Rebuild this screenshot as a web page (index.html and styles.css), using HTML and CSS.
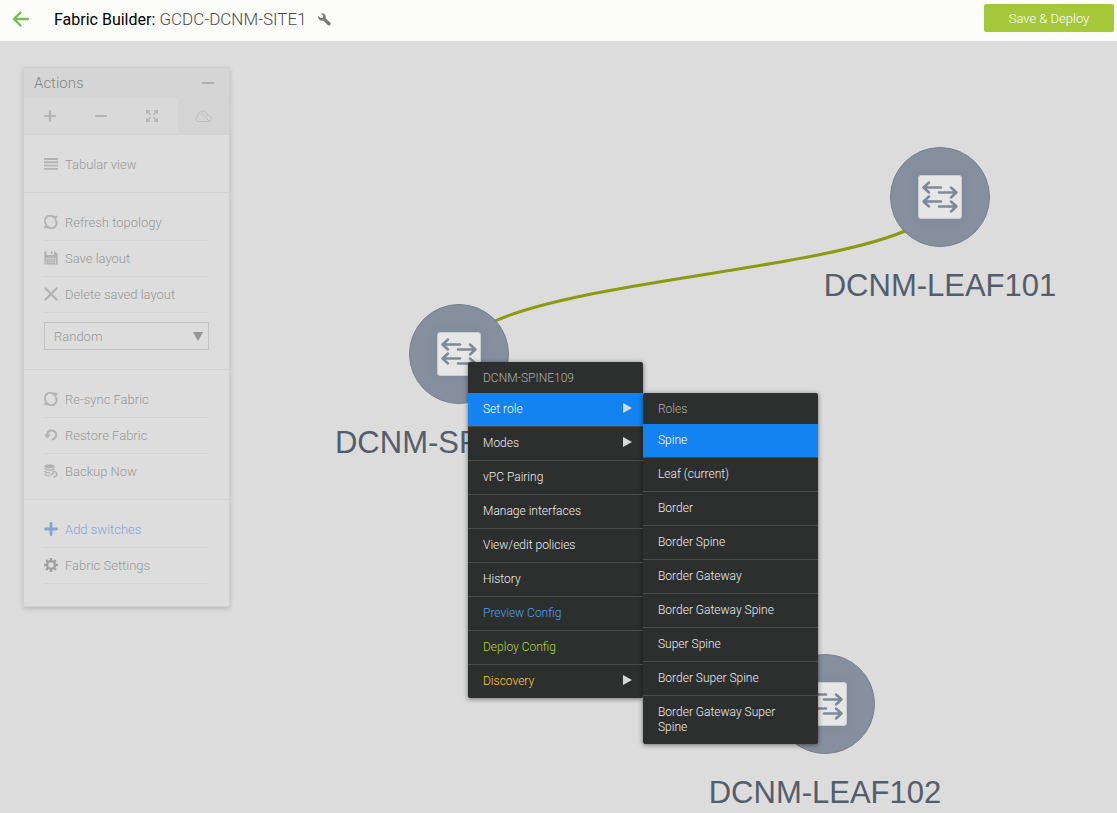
FILE: index.html
```html
<!DOCTYPE html>
<html lang="en">
<head>
<meta charset="utf-8">
<title>Fabric Builder</title>
<link rel="stylesheet" href="styles.css">
</head>
<body>
<svg class="defs" aria-hidden="true">
  <symbol id="sync" viewBox="0 0 14 14"><path d="M2 9A5 5 0 0 1 10 2.700M11.500 5A5 5 0 0 1 3.500 11.300" fill="none" stroke="currentColor" stroke-width="2"/><path d="M8 .8H13.500V2L11.500 5.500ZM0 13.200V12L2 8.500L5.500 13.200Z" fill="currentColor"/></symbol>
  <symbol id="switch" viewBox="0 0 44 44"><rect x=".5" y=".5" width="43" height="43" rx="2.500" fill="#e6e6e6" stroke="#c9ced6"/><path d="M23 12.500H6M11 7.500L5.500 12.500L11 17.500M21 17.500H38M33 12.500L38.500 17.500L33 22.500M23 26.500H6M11 21.500L5.500 26.500L11 31.500M21 31.500H38M33 26.500L38.500 31.500L33 36.500" fill="none" stroke="#7d8998" stroke-width="2.500" stroke-linecap="round" stroke-linejoin="round"/></symbol>
</svg>

<header class="topbar">
  <a class="back" href="#" aria-label="Back"><svg width="18" height="16" viewBox="0 0 18 16"><path d="M8.500 1.500L2 8L8.500 14.500M2.500 8H16" fill="none" stroke="#74bf4b" stroke-width="2.400" stroke-linecap="round" stroke-linejoin="round"/></svg></a>
  <h1 class="title"><span class="title-label">Fabric Builder:</span> GCDC-DCNM-SITE1</h1>
  <svg class="wrench" width="13" height="13" viewBox="0 0 13 13"><path d="M3.200 .4A3.600 3.600 0 0 1 7.500 5.200L12.100 9.600A1.600 1.600 0 0 1 9.700 12L5.200 7.400A3.600 3.600 0 0 1 .4 3L2.700 5.100L4.800 4.700L5.200 2.700Z" fill="#7a7a7a"/></svg>
  <button class="deploy" type="button">Save &amp; Deploy</button>
</header>

<main class="stage">
  <svg class="links" width="100%" height="100%"><path d="M495 280C585 240 815 228 905 190" fill="none" stroke="#8b9a10" stroke-width="3"/></svg>

  <div class="node leaf101"><span class="disc"><svg width="44" height="44"><use href="#switch"/></svg></span><span class="node-name">DCNM-LEAF101</span></div>
  <div class="node spine109"><span class="disc"><svg width="44" height="44"><use href="#switch"/></svg></span><span class="node-name">DCNM-SPINE109</span></div>
  <div class="node leaf102"><span class="disc"><svg width="44" height="44"><use href="#switch"/></svg></span><span class="node-name">DCNM-LEAF102</span></div>

  <aside class="panel">
    <div class="panel-head"><h2 class="panel-title">Actions</h2><button class="collapse" type="button" aria-label="Collapse"></button></div>
    <div class="tools">
      <button class="tool" type="button" aria-label="Zoom in"><svg width="12" height="12" viewBox="0 0 12 12"><path d="M6 1V11M1 6H11" stroke="currentColor" stroke-width="2.200" stroke-linecap="round"/></svg></button>
      <button class="tool" type="button" aria-label="Zoom out"><svg width="12" height="12" viewBox="0 0 12 12"><path d="M1 6H11" stroke="currentColor" stroke-width="2.200" stroke-linecap="round"/></svg></button>
      <button class="tool" type="button" aria-label="Fit to screen"><svg width="12" height="12" viewBox="0 0 12 12"><path d="M.7 4V.7H4M8 .7H11.300V4M11.300 8V11.300H8M4 11.300H.7V8M1 1L4.700 4.700M11 1L7.300 4.700M11 11L7.300 7.300M1 11L4.700 7.300" fill="none" stroke="currentColor" stroke-width="1.400"/></svg></button>
      <button class="tool active" type="button" aria-label="Hide clouds"><svg width="17" height="13" viewBox="0 0 17 13"><path d="M4 11.500C-.3 11.500-.2 6.300 3.100 5.900C3 2.500 5.500 .9 8 1C10.500 1 12 3 12.200 5C17.600 5.400 17.500 11.500 13 11.500ZM6 2.500L15 12" fill="none" stroke="currentColor"/></svg></button>
    </div>
    <section class="group">
      <a class="action" href="#"><svg width="14" height="14" viewBox="0 0 14 14"><path d="M0 2H14M0 5.300H14M0 8.600H14M0 11.900H14" stroke="currentColor" stroke-width="1.900"/></svg>Tabular view</a>
    </section>
    <section class="group">
      <a class="action" href="#"><svg width="14" height="14"><use href="#sync"/></svg>Refresh topology</a>
      <a class="action" href="#"><svg width="14" height="14" viewBox="0 0 14 14"><path d="M.3 .3H2.500V4H9.800V.3H11L13.700 3V13.500H.3Z" fill="currentColor"/><path d="M6.800 .3H8.600V3H6.800Z" fill="currentColor"/><path d="M2.500 12.500V7.500H11.500V12.500M4 9.200H10M4 11.200H10" fill="none" stroke="#d2d2d2" stroke-width=".8"/></svg>Save layout</a>
      <a class="action" href="#"><svg width="14" height="14" viewBox="0 0 14 14"><path d="M1.500 1.500L12.500 12.500M12.500 1.500L1.500 12.500" stroke="currentColor" stroke-width="2.400" stroke-linecap="round"/></svg>Delete saved layout</a>
      <div class="layout-box"><select class="layout" aria-label="Layout"><option>Random</option></select></div>
    </section>
    <section class="group">
      <a class="action" href="#"><svg width="14" height="14"><use href="#sync"/></svg>Re-sync Fabric</a>
      <a class="action" href="#"><svg width="14" height="14" viewBox="0 0 14 14"><path d="M3.200 7A4.500 4.500 0 1 1 7.800 11.300" fill="none" stroke="currentColor" stroke-width="2.200"/><path d="M0 6.500H7L3.500 10.500Z" fill="currentColor"/></svg>Restore Fabric</a>
      <a class="action last" href="#"><svg width="14" height="14" viewBox="0 0 14 14"><ellipse cx="5.500" cy="2.300" rx="5" ry="2" fill="currentColor"/><path d="M.5 4.500C2 6.600 9 6.600 10.500 4.500M.5 7.200C1.500 8.800 4 9 6 8.800M.5 10C1.500 11.600 3.500 12 5.500 11.800M8.500 8.500A2.500 2.500 0 1 1 9.500 12.500M10 9.500C8.500 9.500 7.500 10.500 6.500 10.500" fill="none" stroke="currentColor" stroke-width="1.400"/></svg>Backup Now</a>
    </section>
    <section class="group end">
      <a class="action add" href="#"><svg width="14" height="14" viewBox="0 0 14 14"><path d="M7 1.500V12.500M1.500 7H12.500" stroke="currentColor" stroke-width="2.800" stroke-linecap="round"/></svg>Add switches</a>
      <a class="action settings" href="#"><svg width="14" height="14" viewBox="0 0 14 14"><circle cx="7" cy="7" r="3.900" fill="none" stroke="currentColor" stroke-width="2.400"/><path d="M7 0V3M7 11V14M0 7H3M11 7H14M2.100 2.100L4.200 4.200M9.800 9.800L11.900 11.900M11.900 2.100L9.800 4.200M4.200 9.800L2.100 11.900" stroke="currentColor" stroke-width="2.400"/></svg>Fabric Settings</a>
    </section>
  </aside>

  <nav class="menu context" aria-label="Switch menu">
    <h3 class="menu-title">DCNM-SPINE109</h3>
    <ul class="items">
      <li class="item"><button class="entry selected" type="button">Set role<span class="arrow"></span></button>
        <div class="menu submenu">
          <h3 class="menu-title">Roles</h3>
          <ul class="items">
            <li class="item"><button class="entry selected" type="button">Spine</button></li>
            <li class="item"><button class="entry" type="button">Leaf (current)</button></li>
            <li class="item"><button class="entry" type="button">Border</button></li>
            <li class="item"><button class="entry" type="button">Border Spine</button></li>
            <li class="item"><button class="entry" type="button">Border Gateway</button></li>
            <li class="item"><button class="entry" type="button">Border Gateway Spine</button></li>
            <li class="item"><button class="entry" type="button">Super Spine</button></li>
            <li class="item"><button class="entry" type="button">Border Super Spine</button></li>
            <li class="item"><button class="entry" type="button">Border Gateway Super Spine</button></li>
          </ul>
        </div>
      </li>
      <li class="item"><button class="entry" type="button">Modes<span class="arrow"></span></button></li>
      <li class="item"><button class="entry" type="button">vPC Pairing</button></li>
      <li class="item"><button class="entry" type="button">Manage interfaces</button></li>
      <li class="item"><button class="entry" type="button">View/edit policies</button></li>
      <li class="item"><button class="entry" type="button">History</button></li>
      <li class="item"><button class="entry preview" type="button">Preview Config</button></li>
      <li class="item"><button class="entry push" type="button">Deploy Config</button></li>
      <li class="item"><button class="entry discovery" type="button">Discovery<span class="arrow"></span></button></li>
    </ul>
  </nav>
</main>
</body>
</html>
```
FILE: styles.css
```css
* { box-sizing: border-box; }
body {
  margin: 0;
  min-height: 100vh;
  display: flex;
  flex-direction: column;
  background: #dcdcdc;
  font-family: Roboto, "Liberation Sans", sans-serif;
  font-weight: 300;
}
button, select { font: inherit; }
h1, h2, h3, ul { margin: 0; padding: 0; font-weight: 300; }
ul { list-style: none; }
a { text-decoration: none; color: inherit; }
.defs { display: none; }

.topbar {
  display: flex;
  align-items: center;
  height: 41px;
  padding: 0 3px 3px 12px;
  background: #fcfcfa;
}
.back { display: flex; width: 42px; }
.title { font-size: 17px; line-height: 20px; color: #4c4c4c; }
.title-label { font-size: 16px; font-weight: 400; color: #000; }
.wrench { margin-left: 11px; }
.deploy {
  width: 130px;
  height: 28px;
  margin-left: auto;
  margin-top: -2px;
  border: 0;
  border-radius: 2px;
  background: #a5c83b;
  color: #fff;
  font-size: 13px;
}

.stage { position: relative; flex: 1; padding: 26px 23px; overflow: hidden; }
.links { position: absolute; inset: 0; }
.node {
  position: absolute;
  display: flex;
  flex-direction: column;
  align-items: center;
  gap: 21px;
  width: 258px;
}
.leaf101 { left: 811px; top: 106px; }
.spine109 { left: 330px; top: 263px; }
.leaf102 { left: 696px; top: 613px; }
.disc {
  display: flex;
  align-items: center;
  justify-content: center;
  width: 100px;
  height: 100px;
  border: 1px solid #77818f;
  border-radius: 50%;
  background: #858f9e;
}
.disc svg { filter: drop-shadow(0 0 4px #6c788a55); }
.node-name {
  font: 31px/36px "Liberation Sans", Arial, sans-serif;
  color: #545d6c;
  white-space: nowrap;
}

.panel {
  position: relative;
  width: 207px;
  border: 1px solid #cfcfcf;
  border-radius: 2px;
  background: #dddddd;
  box-shadow: 0 2px 5px #00000026;
  color: #999999;
  font-size: 13px;
}
.panel-head {
  display: flex;
  align-items: center;
  justify-content: space-between;
  height: 30px;
  padding: 0 15px 0 10px;
  background: #d5d5d5;
}
.panel-title { font-size: 15px; color: #858585; }
.collapse { width: 12px; height: 2px; padding: 0; border: 0; background: #b0b0b0; }
.tools { display: grid; grid-template-columns: repeat(4, 1fr); height: 36px; background: #d9d9d9; }
.tool {
  display: flex;
  align-items: center;
  justify-content: center;
  padding: 0;
  border: 0;
  background: none;
  color: #b4b4b4;
}
.tool.active { background: #d4d4d4; color: #bebebe; }
.group { padding: 12px 20px 9px; border-top: 1px solid #d2d2d2; }
.end { padding-bottom: 22px; }
.action {
  display: flex;
  align-items: center;
  gap: 7px;
  height: 36px;
  border-bottom: 1px solid #d3d3d3;
  line-height: 16px;
}
.action svg { margin-bottom: 2px; color: #b3b3b3; }
.action:only-child, .last { border-bottom-color: transparent; }
.add, .action.add svg { color: #86a4cf; }
.action.settings svg { color: #a0a0a0; }
.layout-box { position: relative; margin: 9px 0 10px; }
.layout-box::after {
  content: "";
  position: absolute;
  top: 10px;
  right: 6px;
  border: 5px solid transparent;
  border-top: 9px solid #959595;
  border-bottom: 0;
  pointer-events: none;
}
.layout {
  display: block;
  appearance: none;
  width: 100%;
  height: 28px;
  padding: 0 9px;
  border: 1px solid #c3c3c3;
  border-radius: 0;
  background: transparent;
  color: #999999;
}

.menu {
  position: absolute;
  width: 175px;
  border-radius: 2px;
  background: #2d2f2e;
  box-shadow: 0 1px 5px #00000080;
  color: #eeeeee;
  font-size: 12px;
  line-height: 15px;
}
.context { left: 468px; top: 321px; }
.submenu { left: 100%; top: 0; }
.menu-title { padding: 9px 15px 7px; color: #b0b0b0; font-size: 12px; line-height: 15px; }
.item { position: relative; border-bottom: 1px solid #4a4a4a; }
.item:last-child { border-bottom: 0; }
.entry {
  display: flex;
  align-items: center;
  justify-content: space-between;
  width: 100%;
  padding: 9px 11px 9px 15px;
  border: 0;
  background: none;
  color: inherit;
  text-align: left;
}
.entry.selected { background: #1283f0; color: #fff; }
.arrow { margin-bottom: 3px; border: 5px solid transparent; border-left: 9px solid #d8d8d8; border-right: 0; }
.entry.preview { color: #4ba2ee; }
.entry.push { color: #b0d83a; }
.entry.discovery { color: #ffd030; }
```
